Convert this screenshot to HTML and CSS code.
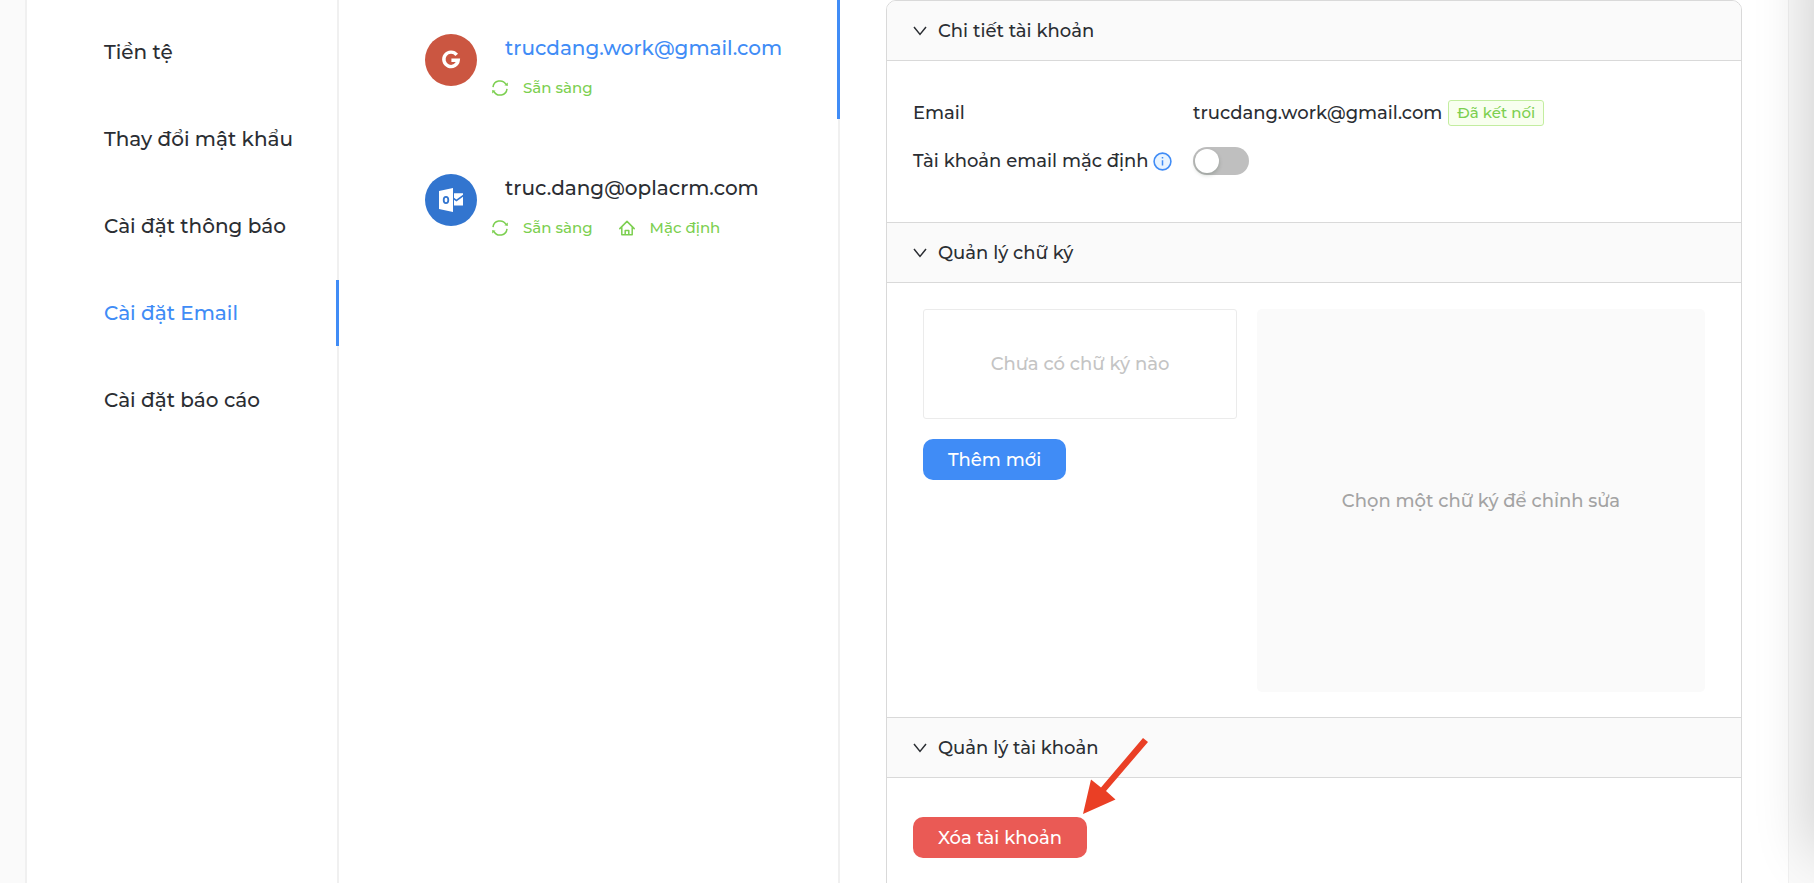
FILE: index.html
```html
<!DOCTYPE html>
<html lang="vi">
<head>
<meta charset="utf-8">
<title>Cài đặt Email</title>
<link rel="stylesheet" href="styles.css">
</head>
<body>
<svg class="defs" aria-hidden="true">
  <symbol id="sync" viewBox="0 0 16 16">
    <path d="M1 7.200A7 7 0 0 1 14 4.400M15 8.800A7 7 0 0 1 2 11.600" fill="none" stroke="currentColor" stroke-width="1.500"/>
    <path d="M15.800 2.600V6L12.400 5.200ZM.2 13.400V10L3.600 10.800Z" fill="currentColor"/>
  </symbol>
  <symbol id="home" viewBox="0 0 16 16">
    <path d="M.8 8.6 8 1.4l7.200 7.200M2.800 7.200v7.600h10.400V7.200M6.200 14.800v-4.400h3.600v4.400" fill="none" stroke="currentColor" stroke-width="1.5" stroke-linejoin="round" stroke-linecap="round"/>
  </symbol>
  <symbol id="chevron" viewBox="0 0 14 14">
    <path d="M1 3 7 10.4 13 3" fill="none" stroke="currentColor" stroke-width="1.5"/>
  </symbol>
</svg>
<div class="page">
  <div class="card">
    <nav class="menu">
      <a class="menu-item" href="#currency">Tiền tệ</a>
      <a class="menu-item" href="#password">Thay đổi mật khẩu</a>
      <a class="menu-item" href="#notifications">Cài đặt thông báo</a>
      <a class="menu-item active" href="#email" aria-current="page">Cài đặt Email</a>
      <a class="menu-item" href="#reports">Cài đặt báo cáo</a>
    </nav>

    <section class="accounts">
      <a class="account active" href="#gmail">
        <span class="avatar google">
          <svg width="20" height="20" viewBox="0 0 20 20" aria-hidden="true"><path d="M15.7 4.9A7.2 7.2 0 1 0 17.2 10.2H10.4" fill="none" stroke="#fff" stroke-width="3.4"/></svg>
        </span>
        <span class="account-info">
          <span class="account-email">trucdang.work@gmail.com</span>
          <span class="statuses">
            <span class="status"><svg class="status-icon" aria-hidden="true"><use href="#sync"/></svg>Sẵn sàng</span>
          </span>
        </span>
      </a>
      <a class="account" href="#outlook">
        <span class="avatar outlook">
          <svg width="24" height="24" viewBox="0 0 24 24" aria-hidden="true">
            <path d="M0 3 14 0V24L0 21ZM15 5.2H24V6.8L17.4 11.6 15 9.8ZM15 11.8 17.4 13.4 24 8.8V17.4H15Z" fill="#fff"/>
            <ellipse cx="7" cy="12" rx="2.3" ry="3.1" fill="none" stroke="#3275cf" stroke-width="1.8"/>
          </svg>
        </span>
        <span class="account-info">
          <span class="account-email">truc.dang@oplacrm.com</span>
          <span class="statuses">
            <span class="status"><svg class="status-icon" aria-hidden="true"><use href="#sync"/></svg>Sẵn sàng</span>
            <span class="status"><svg class="status-icon" aria-hidden="true"><use href="#home"/></svg>Mặc định</span>
          </span>
        </span>
      </a>
    </section>

    <main class="detail">
      <div class="collapse">
        <button class="collapse-head" type="button" aria-expanded="true"><svg class="chevron" aria-hidden="true"><use href="#chevron"/></svg>Chi tiết tài khoản</button>
        <div class="collapse-body info">
          <span>Email</span>
          <span class="value">trucdang.work@gmail.com <span class="tag">Đã kết nối</span></span>
          <label class="label" for="default-account">Tài khoản email mặc định
            <svg width="19" height="19" viewBox="0 0 19 19" aria-hidden="true"><circle cx="9.5" cy="9.5" r="8.4" fill="#e8f4ff" stroke="#408cf6" stroke-width="1.6"/><path d="M9.5 8.2V13.6M9.5 5V6.6" stroke="#408cf6" stroke-width="1.5"/></svg>
          </label>
          <input class="switch" id="default-account" type="checkbox" role="switch">
        </div>
        <button class="collapse-head" type="button" aria-expanded="true"><svg class="chevron" aria-hidden="true"><use href="#chevron"/></svg>Quản lý chữ ký</button>
        <div class="collapse-body signatures">
          <div class="signature-list">
            <div class="empty">Chưa có chữ ký nào</div>
            <button class="btn primary" type="button">Thêm mới</button>
          </div>
          <div class="editor">Chọn một chữ ký để chỉnh sửa</div>
        </div>
        <button class="collapse-head" type="button" aria-expanded="true"><svg class="chevron" aria-hidden="true"><use href="#chevron"/></svg>Quản lý tài khoản</button>
        <div class="collapse-body manage">
          <div class="delete-wrap">
            <button class="btn danger" type="button">Xóa tài khoản</button>
            <svg class="arrow" width="66" height="78" viewBox="0 0 66 78" aria-hidden="true"><path d="M0 77 8 42.500 18 50.500 60 1 65 5 23 54 32.500 62.500Z" fill="#ea3f25"/></svg>
          </div>
        </div>
      </div>
    </main>
  </div>
  <div class="edge-shadow"></div>
</div>
</body>
</html>
```
FILE: styles.css
```css
* { box-sizing: border-box; }

body {
  margin: 0;
  background: #fff;
  color: #2b2e33;
  font: 500 18px/28px Montserrat, Inter, "Noto Sans", sans-serif;
}

a { color: inherit; text-decoration: none; }

.defs { position: absolute; width: 0; height: 0; }

.page {
  position: relative;
  height: calc(100vh - 3px);
  padding: 0 25px;
  overflow: hidden;
  background: #fafafa;
}

.card {
  display: grid;
  grid-template-columns: 312px 501px 1fr;
  height: 100%;
  background: #fff;
  border: solid #f0f0f0;
  border-width: 0 1px 0 2px;
}

.menu {
  display: flex;
  flex-direction: column;
  gap: 21px;
  padding-top: 19px;
  box-shadow: inset -2px 0 #f0f0f0;
}

.menu-item {
  height: 66px;
  padding-left: 77px;
  border-right: 3px solid transparent;
  font-size: 20px;
  line-height: 66px;
}

.menu-item.active { border-color: #408cf6; color: #408cf6; }

.accounts {
  display: flex;
  flex-direction: column;
  gap: 21px;
  box-shadow: inset -2px 0 #f0f0f0;
}

.account {
  display: flex;
  align-items: center;
  gap: 15px;
  height: 119px;
  padding-left: 86px;
  border-right: 3px solid transparent;
}

.account.active { border-color: #408cf6; }
.account.active .account-email { color: #408cf6; }

.avatar {
  display: flex;
  align-items: center;
  justify-content: center;
  width: 52px;
  height: 52px;
  border-radius: 50%;
}

.google { background: #cb5641; }
.outlook { background: #3275cf; }

.account-info { display: flex; flex-direction: column; gap: 12px; padding-top: 16px; }
.account-email { padding-left: 13px; font-size: 20px; }

.statuses { display: flex; gap: 26px; color: #7ccf50; font-size: 15px; }
.status { display: flex; align-items: center; gap: 15px; }
.status-icon { width: 16px; height: 16px; }

.detail { padding: 0 46px; }

.collapse {
  height: 900px;
  background: #fff;
  border: 1px solid #d9d9d9;
  border-radius: 10px;
  overflow: hidden;
}

.collapse-head {
  display: flex;
  align-items: center;
  gap: 11px;
  width: 100%;
  height: 60px;
  padding: 0 26px;
  background: #fafafa;
  border: 0;
  border-bottom: 1px solid #d9d9d9;
  color: inherit;
  font: inherit;
}

.chevron { width: 14px; height: 14px; }

.collapse-body { border-bottom: 1px solid #d9d9d9; }

.info {
  display: grid;
  grid-template-columns: 280px 1fr;
  row-gap: 20px;
  align-items: center;
  padding: 38px 26px 47px;
}

.value, .label { display: flex; align-items: center; gap: 6px; }
.label { gap: 4px; }

.tag {
  padding: 0 8px;
  background: #f8ffef;
  border: 1px solid #c3eda0;
  border-radius: 3px;
  color: #7ccf50;
  font-size: 15px;
  line-height: 24px;
}

.switch {
  appearance: none;
  width: 56px;
  height: 28px;
  margin: 0;
  padding: 2px;
  background: #bfbfbf;
  border-radius: 14px;
}

.switch::before {
  content: "";
  display: block;
  width: 24px;
  height: 24px;
  background: #fff;
  border-radius: 50%;
  box-shadow: 0 2px 4px rgba(0, 35, 11, 0.2);
}

.switch:checked { background: #408cf6; }
.switch:checked::before { margin-left: auto; }

.signatures {
  display: grid;
  grid-template-columns: 314fr 448fr;
  gap: 20px;
  padding: 26px 36px 25px;
}

.signature-list { display: flex; flex-direction: column; align-items: flex-start; gap: 20px; }

.empty {
  width: 100%;
  padding: 40px 0;
  border: 1px solid #ebebeb;
  border-radius: 3px;
  color: #c4c4c4;
  text-align: center;
}

.editor {
  display: grid;
  place-items: center;
  height: 383px;
  background: #fafafa;
  border-radius: 5px;
  color: #a3a3a3;
}

.btn {
  height: 41px;
  padding: 0 25px;
  border: 0;
  border-radius: 10px;
  color: #fff;
  font: inherit;
}

.primary { background: #408cf6; }
.danger { background: #ea5a55; }

.manage { padding: 39px 26px; border: 0; }
.delete-wrap { position: relative; width: fit-content; }
.arrow { position: absolute; right: -62px; bottom: 43px; }

.edge-shadow {
  position: absolute;
  top: -60px;
  bottom: 30px;
  left: 100%;
  width: 60px;
  box-shadow: 0 0 60px rgba(0, 0, 0, 0.2);
}
```
